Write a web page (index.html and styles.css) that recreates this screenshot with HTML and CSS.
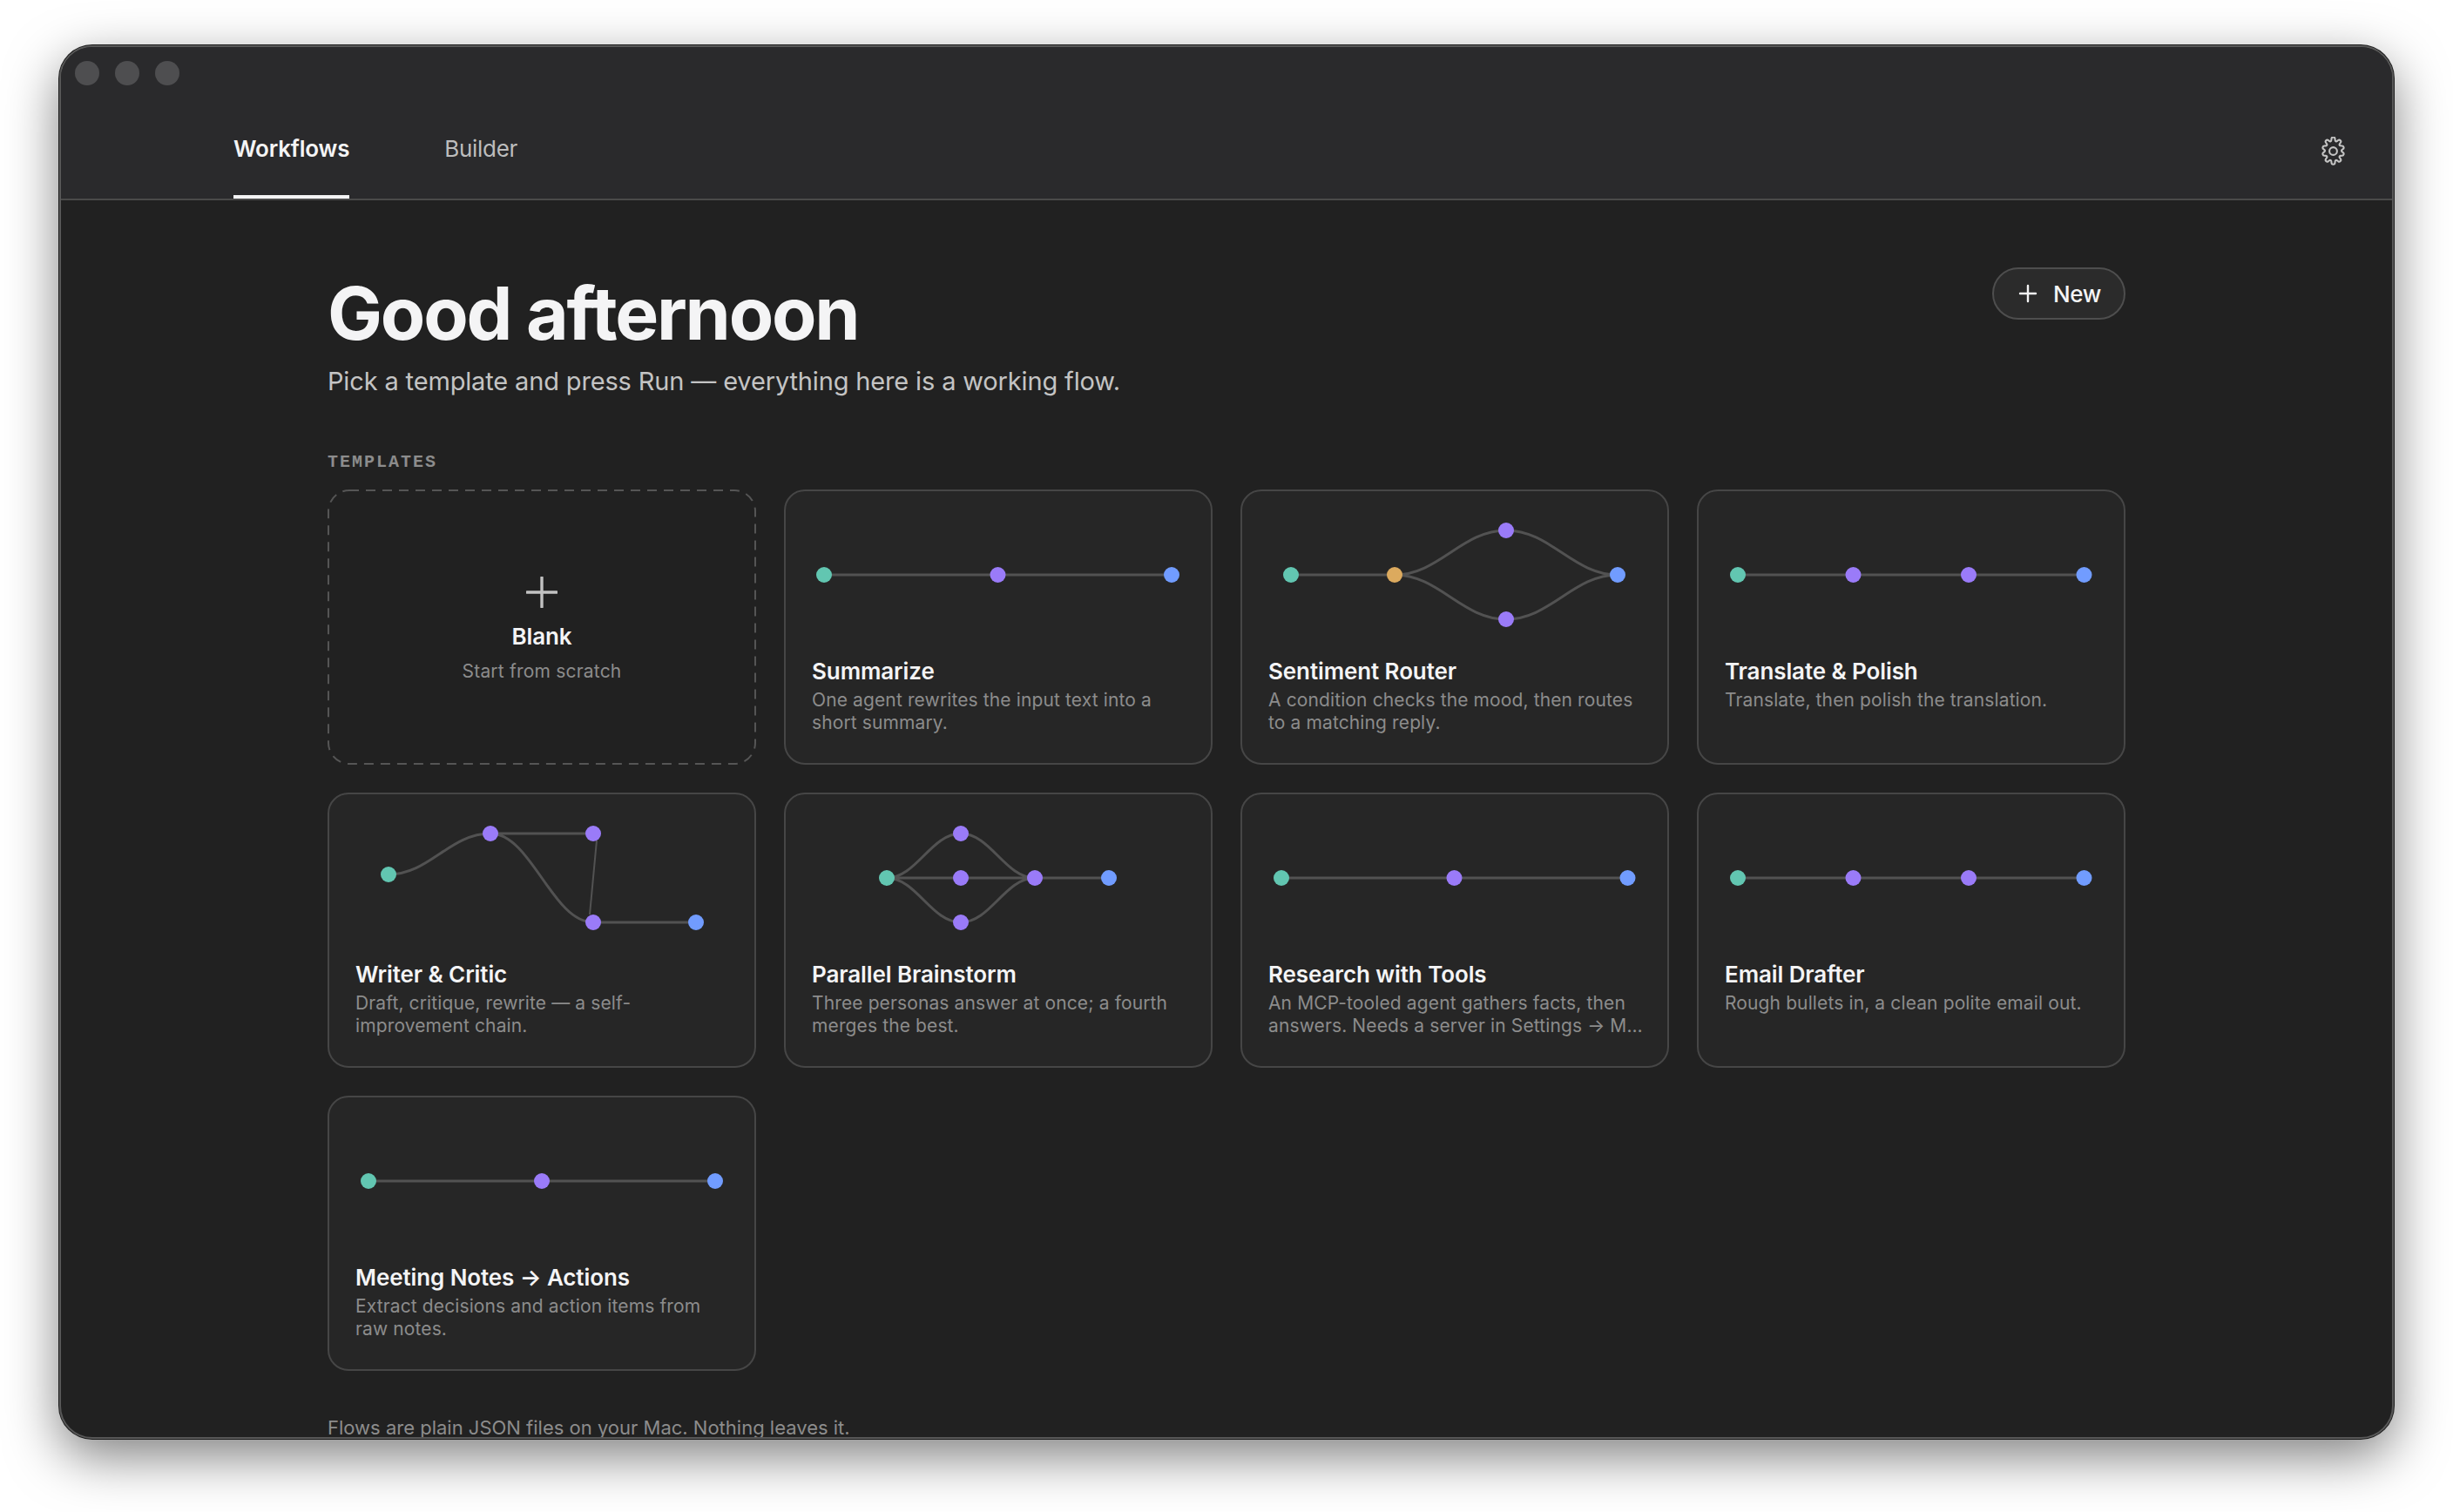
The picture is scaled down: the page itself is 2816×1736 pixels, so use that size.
FILE: index.html
```html
<!DOCTYPE html>
<html lang="en">
<head>
<meta charset="utf-8">
<title>Workflows</title>
<link rel="stylesheet" href="styles.css">
</head>
<body>
<div class="window">
  <header class="chrome">
    <div class="lights"><i class="light"></i><i class="light"></i><i class="light"></i></div>
    <div class="tabbar">
      <nav class="tabs">
        <a class="tab active">Workflows</a>
        <a class="tab">Builder</a>
      </nav>
      <svg class="gear" viewBox="0 0 30 30" fill="none" stroke="currentColor" stroke-width="1.9" stroke-linejoin="round">
        <path d="M13.2 2.2a1.8 1.8 0 0 1 3.6 0l.2 1.6a1.2 1.2 0 0 0 1.9.8l1.3-1a1.8 1.8 0 0 1 2.5 2.5l-1 1.4a1.2 1.2 0 0 0 .8 1.9l1.6.2a1.8 1.8 0 0 1 .9 3.4l-.9.7a1.2 1.2 0 0 0 0 1.9l.9.7a1.8 1.8 0 0 1-.9 3.4l-1.6.2a1.2 1.2 0 0 0-.8 1.9l1 1.4a1.8 1.8 0 0 1-2.5 2.5l-1.3-1a1.2 1.2 0 0 0-1.9.8l-.2 1.6a1.8 1.8 0 0 1-3.6 0l-.2-1.6a1.2 1.2 0 0 0-1.9-.8l-1.3 1a1.8 1.8 0 0 1-2.5-2.5l1-1.4a1.2 1.2 0 0 0-.8-1.9l-1.6-.2a1.8 1.8 0 0 1-.9-3.4l.9-.7a1.2 1.2 0 0 0 0-1.9l-.9-.7a1.8 1.8 0 0 1 .9-3.4l1.6-.2a1.2 1.2 0 0 0 .8-1.9l-1-1.4a1.8 1.8 0 0 1 2.5-2.5l1.3 1a1.2 1.2 0 0 0 1.9-.8z"/>
        <circle cx="15" cy="15" r="4"/>
      </svg>
    </div>
  </header>
  <main class="main">
    <div class="hero">
      <div>
        <h1 class="title">Good afternoon</h1>
        <p class="subtitle">Pick a template and press Run — everything here is a working flow.</p>
      </div>
      <button class="new-btn">
        <svg class="new-plus" viewBox="0 0 22 22" stroke="currentColor" stroke-width="2.4" stroke-linecap="round"><path d="M11 2v18M2 11h18"/></svg>
        <span>New</span>
      </button>
    </div>
    <h2 class="section-label">TEMPLATES</h2>
    <div class="grid">
      <div class="card blank">
        <svg class="dash" viewBox="0 0 492 316" fill="none"><rect x="1" y="1" width="490" height="314" rx="24" stroke="#555" stroke-width="2" stroke-dasharray="11 8"/></svg>
        <svg class="blank-plus" viewBox="0 0 36 36" stroke="#c2c2c2" stroke-width="3.4" stroke-linecap="round"><path d="M18 1v34M1 18h34"/></svg>
        <div class="blank-name">Blank</div>
        <div class="blank-desc">Start from scratch</div>
      </div>

      <div class="card">
        <svg class="flow" viewBox="0 0 492 196">
          <path class="edge" d="M46 98H445"/>
          <circle class="n-start" cx="46" cy="98" r="9"/><circle class="n-agent" cx="245.500" cy="98" r="9"/><circle class="n-end" cx="445" cy="98" r="9"/>
        </svg>
        <div class="name">Summarize</div>
        <div class="desc">One agent rewrites the input text into a short summary.</div>
      </div>

      <div class="card">
        <svg class="flow" viewBox="0 0 492 196">
          <path class="edge" d="M58 98H177M177 98C228 98 254 47 305 47S382 98 433 98M177 98C228 98 254 149 305 149S382 98 433 98"/>
          <circle class="n-start" cx="58" cy="98" r="9"/><circle class="n-cond" cx="177" cy="98" r="9"/><circle class="n-agent" cx="305" cy="47" r="9"/><circle class="n-agent" cx="305" cy="149" r="9"/><circle class="n-end" cx="433" cy="98" r="9"/>
        </svg>
        <div class="name">Sentiment Router</div>
        <div class="desc">A condition checks the mood, then routes to a matching reply.</div>
      </div>

      <div class="card">
        <svg class="flow" viewBox="0 0 492 196">
          <path class="edge" d="M47 98H444"/>
          <circle class="n-start" cx="47" cy="98" r="9"/><circle class="n-agent" cx="179.500" cy="98" r="9"/><circle class="n-agent" cx="312" cy="98" r="9"/><circle class="n-end" cx="444.500" cy="98" r="9"/>
        </svg>
        <div class="name">Translate &amp; Polish</div>
        <div class="desc">Translate, then polish the translation.</div>
      </div>

      <div class="card">
        <svg class="flow" viewBox="0 0 492 196">
          <path class="edge" d="M70 94C117 94 140 47 187 47H305M187 47C234 47 258 149 305 149H423"/>
          <path class="edge thin" d="M309 55L301 140"/>
          <circle class="n-start" cx="70" cy="94" r="9"/><circle class="n-agent" cx="187" cy="47" r="9"/><circle class="n-agent" cx="305" cy="47" r="9"/><circle class="n-agent" cx="305" cy="149" r="9"/><circle class="n-end" cx="423" cy="149" r="9"/>
        </svg>
        <div class="name">Writer &amp; Critic</div>
        <div class="desc">Draft, critique, rewrite — a self-improvement chain.</div>
      </div>

      <div class="card">
        <svg class="flow" viewBox="0 0 492 196">
          <path class="edge" d="M118 98H373M118 98C152 98 169 47 203 47S254 98 288 98M118 98C152 98 169 149 203 149S254 98 288 98"/>
          <circle class="n-start" cx="118" cy="98" r="9"/><circle class="n-agent" cx="203" cy="47" r="9"/><circle class="n-agent" cx="203" cy="98" r="9"/><circle class="n-agent" cx="203" cy="149" r="9"/><circle class="n-agent" cx="288" cy="98" r="9"/><circle class="n-end" cx="373" cy="98" r="9"/>
        </svg>
        <div class="name">Parallel Brainstorm</div>
        <div class="desc">Three personas answer at once; a fourth merges the best.</div>
      </div>

      <div class="card">
        <svg class="flow" viewBox="0 0 492 196">
          <path class="edge" d="M47 98H444"/>
          <circle class="n-start" cx="47" cy="98" r="9"/><circle class="n-agent" cx="245.500" cy="98" r="9"/><circle class="n-end" cx="444.500" cy="98" r="9"/>
        </svg>
        <div class="name">Research with Tools</div>
        <div class="desc wide">An MCP-tooled agent gathers facts, then answers. Needs a server in Settings → M…</div>
      </div>

      <div class="card">
        <svg class="flow" viewBox="0 0 492 196">
          <path class="edge" d="M47 98H444"/>
          <circle class="n-start" cx="47" cy="98" r="9"/><circle class="n-agent" cx="179.500" cy="98" r="9"/><circle class="n-agent" cx="312" cy="98" r="9"/><circle class="n-end" cx="444.500" cy="98" r="9"/>
        </svg>
        <div class="name">Email Drafter</div>
        <div class="desc">Rough bullets in, a clean polite email out.</div>
      </div>

      <div class="card">
        <svg class="flow" viewBox="0 0 492 196">
          <path class="edge" d="M47 98H445"/>
          <circle class="n-start" cx="47" cy="98" r="9"/><circle class="n-agent" cx="246" cy="98" r="9"/><circle class="n-end" cx="445" cy="98" r="9"/>
        </svg>
        <div class="name">Meeting Notes → Actions</div>
        <div class="desc">Extract decisions and action items from raw notes.</div>
      </div>
    </div>
    <p class="foot">Flows are plain JSON files on your Mac. Nothing leaves it.</p>
  </main>
</div>
</body>
</html>
```

FILE: styles.css
```css
* { box-sizing: border-box; }
html, body { margin: 0; height: 100%; }
body {
  background: #fff;
  padding: 52px 68px 84px;
  font-family: Inter, "Noto Sans", sans-serif;
  overflow: hidden;
}
.window {
  height: 1600px;
  border-radius: 38px;
  background: #212121;
  border: 2px solid #585858;
  box-shadow: 0 0 0 1px #1c1c1c, 0 20px 60px rgba(0,0,0,.5);
  overflow: hidden;
  display: flex;
  flex-direction: column;
}
.chrome {
  background: #2a2a2c;
  border-bottom: 2px solid #4a4a4a;
  height: 176px;
  display: flex;
  flex-direction: column;
}
.lights { display: flex; gap: 18px; padding: 16px 0 0 16px; }
.light { width: 28px; height: 28px; border-radius: 50%; background: #4e4e50; }
.tabbar {
  flex: 1;
  display: flex;
  justify-content: space-between;
  align-items: stretch;
  padding: 0 51px 0 198px;
}
.tabs { display: flex; gap: 109px; }
.tab {
  display: flex;
  align-items: center;
  padding-top: 19px;
  font-size: 26px;
  font-weight: 400;
  letter-spacing: -.3px;
  color: #bdbdbd;
  border-bottom: 4px solid transparent;
}
.tab.active { color: #f4f4f5; font-weight: 600; letter-spacing: -.2px; border-bottom-color: #f4f4f5; }
.gear { width: 33px; height: 33px; color: #c4c4c4; align-self: center; margin-top: 20px; }
.main { flex: 1; padding: 0 306px; min-height: 0; }
.hero { display: flex; justify-content: space-between; align-items: flex-start; padding-top: 80px; }
.title {
  margin: 0;
  font-size: 84px;
  line-height: 100px;
  font-weight: 700;
  letter-spacing: -2.2px;
  color: #f4f4f5;
}
.subtitle { margin: 8px 0 0; font-size: 29px; line-height: 40px; letter-spacing: -.15px; color: #c4c4c4; }
.new-btn {
  display: flex;
  align-items: center;
  gap: 18px;
  height: 60px;
  width: 153px;
  margin-top: -3px;
  padding: 0 0 0 28px;
  border-radius: 30px;
  border: 2px solid #4e4e4e;
  background: #2b2b2b;
  color: #f4f4f5;
  font: 500 26px Inter, sans-serif;
  letter-spacing: -.4px;
}
.new-plus { width: 22px; height: 22px; flex: none; }
.section-label {
  margin: 61px 0 19px;
  font-family: "Liberation Mono", monospace;
  font-size: 20px;
  line-height: 24px;
  font-weight: 700;
  letter-spacing: 2px;
  color: #8c8c8c;
}
.grid { display: grid; grid-template-columns: repeat(4, 492px); grid-auto-rows: 316px; gap: 32px; }
.card {
  position: relative;
  background: #262626;
  border: 2px solid #464646;
  border-radius: 24px;
  padding: 0 30px;
}
.card.blank {
  background: transparent;
  border: 0;
  display: flex;
  flex-direction: column;
  align-items: center;
  padding-top: 100px;
}
.dash { position: absolute; inset: 0; width: 100%; height: 100%; }
.blank-plus { width: 36px; height: 36px; }
.blank-name { margin-top: 15px; font-size: 26px; line-height: 36px; font-weight: 600; letter-spacing: -.1px; color: #f4f4f5; }
.blank-desc { margin-top: 9px; font-size: 21px; line-height: 26px; color: #8c8c8c; letter-spacing: .2px; }
.flow { display: block; width: 492px; height: 196px; margin: -2px -32px 0; }
.edge { fill: none; stroke: #525252; stroke-width: 3; }
.edge.thin { stroke-width: 2; }
.n-start { fill: #62c6b1; }
.n-agent { fill: #9a7bf8; }
.n-end { fill: #719cff; }
.n-cond { fill: #dcaa5e; }
.name { margin-top: -5px; font-size: 26px; line-height: 36px; font-weight: 600; letter-spacing: -.1px; color: #f4f4f5; }
.desc { margin-top: 2px; font-size: 21px; line-height: 26px; letter-spacing: .12px; color: #8c8c8c; }
.desc.wide { margin-right: -10px; }
.foot { margin: 52px 0 0; font-size: 22px; line-height: 26px; color: #8c8c8c; }
```
